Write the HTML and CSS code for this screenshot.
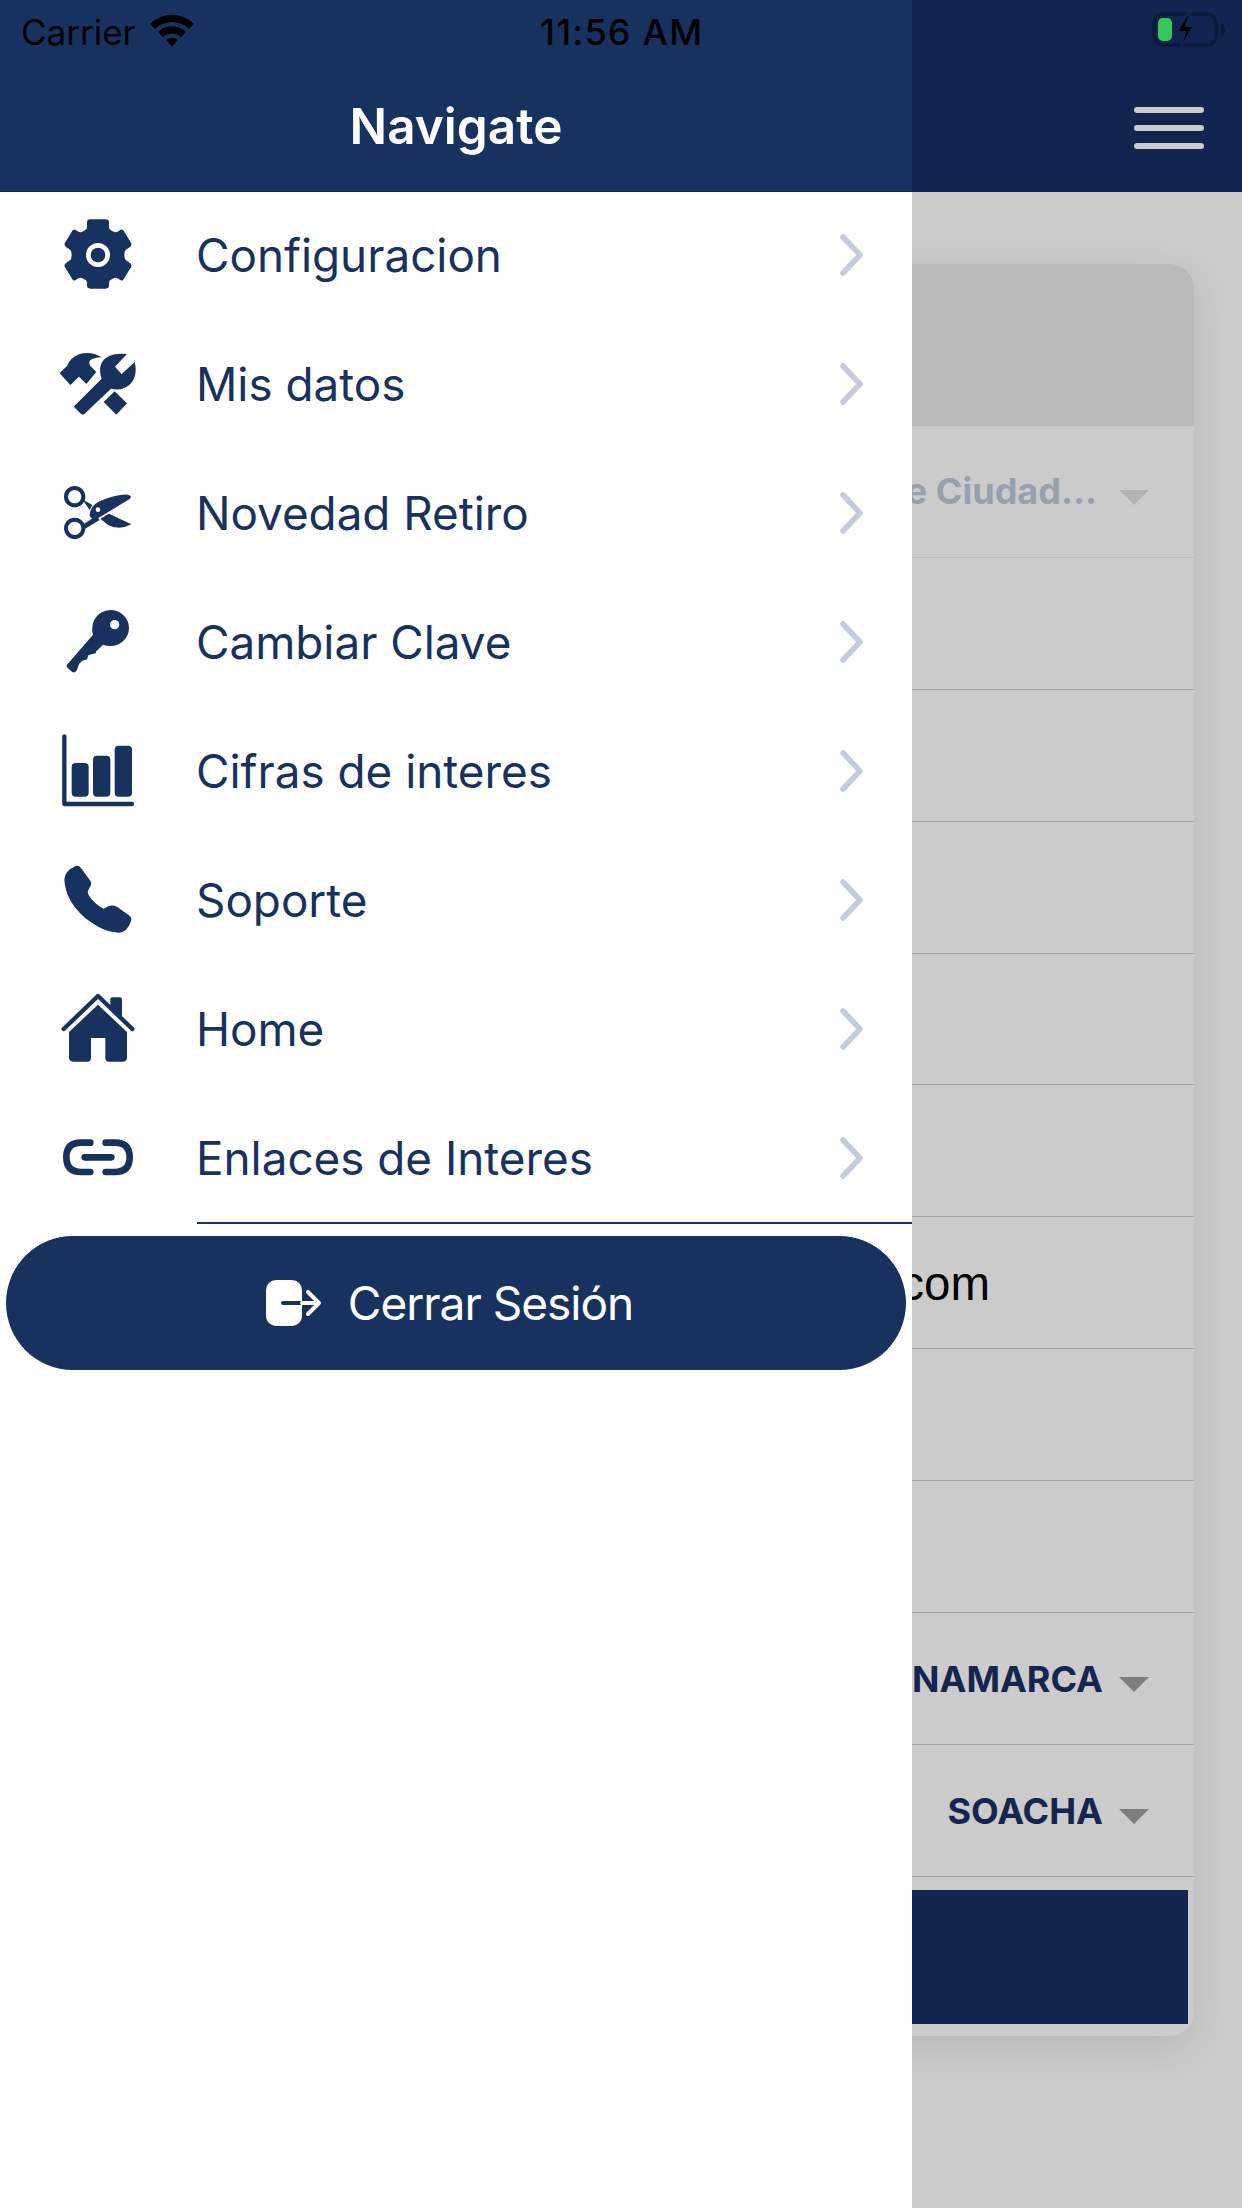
FILE: index.html
```html
<!DOCTYPE html>
<html lang="es">
<head>
  <meta charset="UTF-8" />
  <meta name="viewport" content="width=device-width, initial-scale=1.0"/>
  <title>Navigate</title>
  <link rel="stylesheet" href="styles.css">
</head>
<body>
  <div class="screen">

    <!-- page behind the drawer -->
    <div class="app">
      <header class="app-bar">
        <div class="burger"><span></span><span></span><span></span></div>
      </header>
      <section class="card">
        <div class="card-top"></div>
        <div class="field field-first"><span class="value value-muted">Seleccione Ciudad...</span><i class="caret caret-light"></i></div>
        <div class="field"></div>
        <div class="field"></div>
        <div class="field"></div>
        <div class="field"></div>
        <div class="field"></div>
        <div class="field field-mail"><span class="mail">correo@mail.com</span></div>
        <div class="field"></div>
        <div class="field"></div>
        <div class="field"><span class="value">CUNDINAMARCA</span><i class="caret"></i></div>
        <div class="field"><span class="value">SOACHA</span><i class="caret"></i></div>
        <div class="card-btn"></div>
      </section>
    </div>

    <!-- drawer -->
    <aside class="drawer">
      <h2 class="drawer-title">Navigate</h2>
      <ul class="menu">
        <li class="menu-item">
          <svg class="menu-icon" viewBox="25 15 300 300"><path fill-rule="evenodd" d="M152 58H198Q208 58 208 68V82Q208 90 216 92L224 96Q230 98 236 94L242 90Q248 86 252 92L274 128Q278 134 272 140L258 150Q254 154 254 165Q254 176 258 180L272 190Q278 196 274 202L252 238Q248 244 242 240L236 236Q230 232 224 234L216 238Q208 240 208 248V256Q208 266 198 266H152Q142 266 142 256V248Q142 240 134 238L126 234Q120 232 114 236L108 240Q102 244 98 238L76 202Q72 196 78 190L92 180Q96 176 96 165Q96 154 92 150L78 140Q72 134 76 128L98 92Q102 86 108 90L114 94Q120 98 126 96L134 92Q142 90 142 82V68Q142 58 152 58ZM175 129A36 36 0 1 0 175 201A36 36 0 1 0 175 129Z"/><circle cx="175" cy="165" r="22"/></svg>
          <span class="menu-label">Configuracion</span>
          <svg class="chevron" viewBox="0 0 24 42"><path d="M3 3L20 21L3 39"/></svg>
        </li>
        <li class="menu-item">
          <svg class="menu-icon" viewBox="25 402 300 300"><path d="M104 618L186 536Q176 510 186 488Q204 456 262 462L226 500L246 522L285 486Q296 530 268 556Q246 574 214 566L134 642Q128 646 122 640L106 624Q102 620 104 618Z"/><path d="M60 520L82 498Q92 472 120 462Q155 452 186 472Q165 472 150 482Q146 490 152 498L170 516L140 552L118 530L92 555Z"/><path d="M192 606L225 574L262 610L230 644Z"/></svg>
          <span class="menu-label">Mis datos</span>
          <svg class="chevron" viewBox="0 0 24 42"><path d="M3 3L20 21L3 39"/></svg>
        </li>
        <li class="menu-item">
          <svg class="menu-icon" viewBox="25 789 300 300"><path fill-rule="evenodd" d="M105 858A32 32 0 1 0 105 922A32 32 0 1 0 105 858ZM105 870A20 20 0 1 1 105 910A20 20 0 1 1 105 870ZM105 953A32 32 0 1 0 105 1017A32 32 0 1 0 105 953ZM105 965A20 20 0 1 1 105 1005A20 20 0 1 1 105 965Z"/><path d="M128 898L158 915L150 930ZM128 975L170 947L180 960L134 988Z"/><path fill-rule="evenodd" d="M150 948Q150 918 180 904Q230 882 265 884Q280 888 270 897Q240 915 175 955Q158 962 150 948ZM175 922A7 7 0 1 0 175 936A7 7 0 1 0 175 922Z"/><path d="M182 956L208 941L275 973Q240 992 205 975Z"/></svg>
          <span class="menu-label">Novedad Retiro</span>
          <svg class="chevron" viewBox="0 0 24 42"><path d="M3 3L20 21L3 39"/></svg>
        </li>
        <li class="menu-item">
          <svg class="menu-icon" viewBox="25 6 300 300"><path fill-rule="evenodd" d="M212 60A56 54 0 0 1 212 168Q200 168 190 164L170 184L168 190L158 192L146 196L142 208L128 212L118 222L112 240Q106 250 98 246L84 234Q78 228 84 222L160 134Q156 124 158 112A56 54 0 0 1 212 60ZM225 90A14 14 0 1 0 225 118A14 14 0 1 0 225 90Z"/></svg>
          <span class="menu-label">Cambiar Clave</span>
          <svg class="chevron" viewBox="0 0 24 42"><path d="M3 3L20 21L3 39"/></svg>
        </li>
        <li class="menu-item">
          <svg class="menu-icon" viewBox="25 393 300 300"><path class="line" d="M74 439V642H277"/><rect x="96" y="519" width="51" height="101" rx="12"/><rect x="160" y="497" width="52" height="123" rx="12"/><rect x="225" y="467" width="52" height="153" rx="12"/></svg>
          <span class="menu-label">Cifras de interes</span>
          <svg class="chevron" viewBox="0 0 24 42"><path d="M3 3L20 21L3 39"/></svg>
        </li>
        <li class="menu-item">
          <svg class="menu-icon" viewBox="25 780 300 300"><path d="M108 828Q118 826 124 834L152 872Q158 882 150 892L144 906Q146 918 160 932Q178 950 192 956L208 948Q220 944 232 950L268 976Q278 984 274 994Q262 1028 238 1028Q190 1028 134 982Q76 930 74 868Q76 842 108 828Z"/></svg>
          <span class="menu-label">Soporte</span>
          <svg class="chevron" viewBox="0 0 24 42"><path d="M3 3L20 21L3 39"/></svg>
        </li>
        <li class="menu-item">
          <svg class="menu-icon" viewBox="25 57 300 300"><path class="line" d="M72 207L175 108L278 207"/><path d="M175 134L262 216V292Q262 305 250 305H208Q197 305 197 294V234H154V294Q154 305 143 305H100Q88 305 88 292V216Z"/><path d="M212 118Q212 112 218 112H240Q247 112 247 118V170L212 136Z"/></svg>
          <span class="menu-label">Home</span>
          <svg class="chevron" viewBox="0 0 24 42"><path d="M3 3L20 21L3 39"/></svg>
        </li>
        <li class="menu-item">
          <svg class="menu-icon" viewBox="25 444 300 300"><path class="link" d="M152 548H124Q80 548 80 592Q80 636 124 636H152M198 548H226Q270 548 270 592Q270 636 226 636H198M135 592H215"/></svg>
          <span class="menu-label">Enlaces de Interes</span>
          <svg class="chevron" viewBox="0 0 24 42"><path d="M3 3L20 21L3 39"/></svg>
        </li>
      </ul>
      <div class="menu-rule"></div>
      <button class="logout" type="button">
        <svg class="logout-icon" viewBox="0 0 56 48"><rect x="0" y="1" width="36" height="46" rx="10"/><path class="arrow-in" d="M17 24H36"/><path class="arrow-out" d="M36 24H53M42 13L53 24L42 35"/></svg>
        Cerrar Sesión
      </button>
    </aside>

    <!-- status bar on top of everything -->
    <div class="status">
      <div class="status-left">
        Carrier
        <svg class="wifi" viewBox="0 0 46 34"><path d="M1 11A31 31 0 0 1 45 11L40 16A24 24 0 0 0 6 16Z"/><path d="M9 19A20 20 0 0 1 37 19L32 24A13 13 0 0 0 14 24Z"/><path d="M17 27A9 9 0 0 1 29 27L23 34Z"/></svg>
      </div>
      <div class="status-time">11:56 AM</div>
      <svg class="battery" viewBox="0 0 74 36"><rect class="batt-body" x="2" y="2" width="62" height="31" rx="9"/><path class="batt-nub" d="M69 11Q73 14 73 18Q73 22 69 25Z"/><rect class="batt-fill" x="6" y="6" width="14" height="23" rx="5"/><path class="batt-bolt" d="M36 1L25 20H33L29 35L42 14H34L38 1Z"/></svg>
    </div>
  </div>
</body>
</html>
```

FILE: styles.css
```css
* { box-sizing: border-box; }
html, body { margin: 0; padding: 0; }
body { font-family: Inter, "Noto Sans", sans-serif; background: #cbcbcb; }

.screen { position: relative; width: 1242px; height: 2208px; overflow: hidden; }

/* page behind the drawer */
.app { height: 100%; background: #cbcbcb; }
.app-bar { height: 192px; background: #122550; display: flex; justify-content: flex-end; padding: 107px 38px 0 0; }
.burger { width: 70px; display: flex; flex-direction: column; gap: 12px; }
.burger span { height: 6px; border-radius: 3px; background: #cbcbcb; }

.card { margin: 72px 48px 0 48px; height: 1772px; border-radius: 24px; background: #cbcbcb; box-shadow: 0 12px 40px rgba(0, 0, 0, .1); overflow: hidden; }
.card-top { height: 162px; background: #b9b9b9; }
.field { height: 131.9px; border-bottom: 1px solid #a5a5a5; display: flex; align-items: center; justify-content: flex-end; padding-right: 45px; }
.field-first { border-bottom-color: #bdbdbd; }
.field-mail { padding-right: 204px; }
.value { margin-top: 2px; font-size: 36px; font-weight: 700; color: #14264f; white-space: nowrap; }
.value-muted { margin-top: 0; margin-right: 6px; color: #98a0ae; }
.mail { margin-top: 2px; font-family: "Liberation Sans", sans-serif; font-size: 47.5px; color: #000; }
.caret { margin-left: 16px; margin-top: 12px; width: 0; height: 0; border-left: 15px solid transparent; border-right: 15px solid transparent; border-top: 15px solid #7e7e7e; }
.caret-light { border-top-color: #b2b2b2; }
.card-btn { height: 134px; margin: 13px 6px 0 0; background: #13264f; }

/* drawer */
.drawer { position: absolute; top: 0; left: 0; bottom: 0; width: 912px; background: #fff; }
.drawer-title { margin: 0; height: 191px; padding-top: 96px; background: #183260; box-shadow: 0 1px 0 #10244a; color: #fff; font-size: 49.5px; font-weight: 600; text-align: center; line-height: 60px; }
.menu { list-style: none; margin: -1px 0 0 0; padding: 0; }
.menu-item { height: 129px; display: flex; align-items: center; padding-left: 48px; padding-right: 48px; }
.menu-icon { width: 100px; height: 100px; fill: #183260; flex: none; }
.menu-icon .line { fill: none; stroke: #183260; stroke-width: 13; stroke-linecap: round; stroke-linejoin: round; }
.menu-icon .link { fill: none; stroke: #183260; stroke-width: 20; stroke-linecap: round; }
.menu-label { flex: 1; margin: 2px 0 0 48px; color: #183260; font-size: 45.8px; white-space: nowrap; }
.chevron { width: 24px; height: 42px; fill: none; stroke: #c4cbda; stroke-width: 5.5; stroke-linecap: round; stroke-linejoin: round; flex: none; }
.menu-rule { height: 2px; margin: 0 0 0 197px; background: #183260; }

.logout { display: flex; align-items: center; justify-content: center; width: 900px; height: 134px; margin: 12px 0 0 6px; padding: 0 13px 0 0; border: 0; border-radius: 67px; background: #183260; color: #fff; font-family: inherit; font-size: 46px; letter-spacing: -1px; }
.logout-icon { width: 56px; height: 48px; margin-right: 26px; }
.logout-icon rect { fill: #fff; }
.arrow-in { fill: none; stroke: #183260; stroke-width: 4; stroke-linecap: round; }
.arrow-out { fill: none; stroke: #fff; stroke-width: 4; stroke-linecap: round; stroke-linejoin: round; }

/* status bar */
.status { position: absolute; top: 0; left: 0; right: 0; height: 60px; }
.status-left { position: absolute; left: 21px; top: 12px; display: flex; align-items: center; gap: 13px; font-size: 35px; line-height: 40px; color: #000; }
.status-time { position: absolute; left: 540px; top: 12px; font-size: 36px; font-weight: 500; letter-spacing: 1.2px; line-height: 40px; color: #000; }
.wifi { width: 46px; height: 34px; margin-top: -4px; fill: #000; }
.battery { position: absolute; left: 1152px; top: 12px; width: 74px; height: 36px; }
.batt-body { fill: none; stroke: #0b1a3a; stroke-width: 3.5; }
.batt-nub { fill: #0b1a3a; }
.batt-fill { fill: #34c759; }
.batt-bolt { fill: #000; stroke: #122550; stroke-width: 2; }
```
